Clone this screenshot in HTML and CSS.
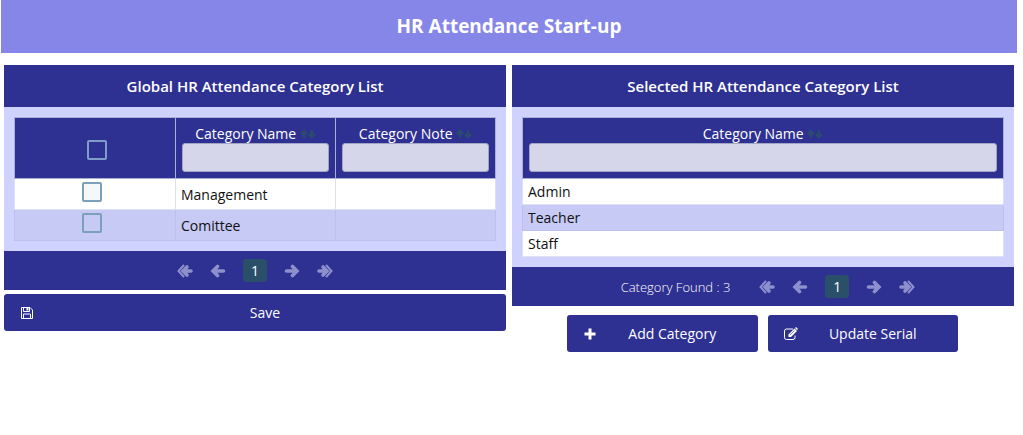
FILE: index.html
```html
<!DOCTYPE html>
<html lang="en">
<head>
<meta charset="utf-8">
<title>HR Attendance Start-up</title>
<link rel="stylesheet" href="styles.css">
</head>
<body>
<svg class="defs" aria-hidden="true">
  <symbol id="arrow-left" viewBox="0 0 16 14"><path d="M7.500 2.500L3 7l4.500 4.500M3.500 7H13.500" fill="none" stroke="currentColor" stroke-width="3.600" stroke-linecap="round"/></symbol>
  <symbol id="arrow-first" viewBox="0 0 16 14"><path d="M6.500 1.500L1.500 7l5 5.500" fill="none" stroke="currentColor" stroke-width="2" stroke-linecap="round"/><path d="M10 3L6 7l4 4M6.500 7H14" fill="none" stroke="currentColor" stroke-width="3.600" stroke-linecap="round"/></symbol>
  <symbol id="sort" viewBox="0 0 16 10"><path d="M4 9V2M1 5l3-3 3 3M12 1v7M9 5l3 3 3-3" fill="none" stroke="currentColor" stroke-width="2.500"/></symbol>
</svg>
<header class="banner"><h1>HR Attendance Start-up</h1></header>
<main class="columns">
  <section class="column">
    <div class="panel">
      <h2 class="panel-title">Global HR Attendance Category List</h2>
      <div class="panel-body">
        <table class="grid grid-select">
          <thead><tr>
            <th><input type="checkbox" aria-label="Select all"></th>
            <th><label class="heading" for="global-name">Category Name <svg class="sort"><use href="#sort"/></svg></label><input class="filter" id="global-name" type="text"></th>
            <th><label class="heading" for="global-note">Category Note <svg class="sort"><use href="#sort"/></svg></label><input class="filter" id="global-note" type="text"></th>
          </tr></thead>
          <tbody>
            <tr><td class="pick"><input type="checkbox" aria-label="Select Management"></td><td>Management</td><td></td></tr>
            <tr><td class="pick"><input type="checkbox" aria-label="Select Comittee"></td><td>Comittee</td><td></td></tr>
          </tbody>
        </table>
      </div>
      <nav class="pager" aria-label="Global list pages">
        <button class="step" aria-label="First"><svg><use href="#arrow-first"/></svg></button>
        <button class="step" aria-label="Previous"><svg><use href="#arrow-left"/></svg></button>
        <button class="page">1</button>
        <button class="step next" aria-label="Next"><svg><use href="#arrow-left"/></svg></button>
        <button class="step next" aria-label="Last"><svg><use href="#arrow-first"/></svg></button>
      </nav>
    </div>
    <button class="action save"><svg viewBox="0 0 14 14"><path d="M1.500 1.500h8.500l2.500 2.500v8.500h-11zM3.500 12.500v-4.500h7v4.500M3.500 1.500v4h6v-4" fill="none" stroke="currentColor"/><path d="M6.500 1.500h2v3h-2z" fill="currentColor"/></svg><span>Save</span></button>
  </section>
  <section class="column">
    <div class="panel">
      <h2 class="panel-title">Selected HR Attendance Category List</h2>
      <div class="panel-body">
        <table class="grid">
          <thead><tr>
            <th><label class="heading" for="selected-name">Category Name <svg class="sort"><use href="#sort"/></svg></label><input class="filter" id="selected-name" type="text"></th>
          </tr></thead>
          <tbody>
            <tr><td>Admin</td></tr>
            <tr><td>Teacher</td></tr>
            <tr><td>Staff</td></tr>
          </tbody>
        </table>
      </div>
      <nav class="pager pager-counted" aria-label="Selected list pages">
        <span class="count">Category Found : 3</span>
        <button class="step" aria-label="First"><svg><use href="#arrow-first"/></svg></button>
        <button class="step" aria-label="Previous"><svg><use href="#arrow-left"/></svg></button>
        <button class="page">1</button>
        <button class="step next" aria-label="Next"><svg><use href="#arrow-left"/></svg></button>
        <button class="step next" aria-label="Last"><svg><use href="#arrow-first"/></svg></button>
      </nav>
    </div>
    <div class="actions">
      <button class="action"><svg viewBox="0 0 14 14"><path d="M7 1.500v11M1.500 7h11" stroke="currentColor" stroke-width="3"/></svg><span>Add Category</span></button>
      <button class="action"><svg viewBox="0 0 14 14"><path d="M9 2H2.500Q.500 2 .500 4v6.500q0 2 2 2H9q2 0 2-2V8.500" fill="none" stroke="currentColor"/><path d="M4.500 7.500L10.500 1.500l2.500 2.500-6 6H4.500z" fill="currentColor"/><path d="M11 1l1-1 2 2-1 1z" fill="currentColor"/><path d="M6 8l4.500-4.500" stroke="#2e3092" stroke-width=".6"/></svg><span>Update Serial</span></button>
    </div>
  </section>
</main>
</body>
</html>
```
FILE: styles.css
```css
* { box-sizing: border-box; }
body {
  margin: 0;
  padding: 0 6px 0 1px;
  background: #fff;
  color: #111;
  font: 14px/20px "Open Sans", sans-serif;
}
button, input { font: inherit; }
.defs { position: absolute; width: 0; height: 0; }
.banner { padding: 13px 0 14px; background: #8586e8; color: #fff; text-align: center; }
h1 { margin: 0; font-size: 19px; line-height: 26px; font-weight: 700; }
.columns { display: grid; grid-template-columns: 1fr 1fr; gap: 6px; padding: 12px 3px 0; }
.panel { background: #cfd1ff; }
.panel-title {
  margin: 0;
  padding: 10px;
  background: #2e3092;
  color: #fff;
  font-size: 15px;
  line-height: 22px;
  font-weight: 600;
  text-align: center;
}
.panel-body { padding: 10px; }

.grid { width: 100%; border-collapse: collapse; table-layout: fixed; }
.grid th { height: 61px; padding: 6px; border: 1px solid #a9b0d6; background: #2e3092; color: #fff; font-weight: 400; text-align: center; vertical-align: middle; }
.grid-select th:first-child { width: 161px; }
.grid td { height: 26px; padding: 0 5px; border: 1px solid #bdc0ea; }
.grid tbody tr { background: #fff; }
.grid tbody tr:nth-child(even) { background: #c6caf5; }
.grid-select td { height: 31px; padding-top: 2px; }
.grid tbody tr:nth-child(odd) td { border-color: #dfe1f2; }
.grid td.pick { padding: 0 6px 5px 0; text-align: center; }
.heading { display: block; line-height: 18px; font-weight: 500; }
.sort { width: 16px; height: 10px; color: #2b4a70; }
.filter { display: block; width: 100%; height: 29px; padding: 4px; border: 1px solid #a2a4c4; border-radius: 3px; background: #d5d6e9; }
input[type="checkbox"] {
  appearance: none;
  display: inline-block;
  width: 20px;
  height: 20px;
  margin: 0;
  border: 2px solid #7ba0ba;
  border-radius: 2px;
  background: transparent;
  vertical-align: middle;
}
tr:nth-child(odd) .pick input { background: #f5f8fa; }
th input[type="checkbox"] { margin: 4px 0 0 4px; border-color: #7f9cca; }

.pager { display: flex; align-items: center; justify-content: center; gap: 17px; padding: 8px; background: #2e3092; color: #fff; }
.pager-counted { padding-left: 18px; }
.pager button { padding: 0; border: 0; }
.step { display: flex; width: 16px; height: 14px; background: none; color: #8d90cc; }
.step svg { width: 16px; height: 14px; }
.next { transform: scaleX(-1); }
.page { width: 24px; height: 23px; border-radius: 3px; background: #2a5069; color: #fff; font-weight: 500; }
.count { margin-right: 12px; color: #fff; font-size: 13px; font-weight: 300; }

.action {
  display: flex;
  flex: 1;
  align-items: center;
  height: 37px;
  padding: 0 16px;
  border: 0;
  border-radius: 3px;
  background: #2e3092;
  color: #fff;
}
.action svg { width: 14px; height: 14px; }
.action span { flex: 1; padding-left: 6px; text-align: center; }
.save { width: 100%; margin-top: 4px; }
.actions { display: flex; gap: 10px; padding: 9px 56px 0 55px; }
```
